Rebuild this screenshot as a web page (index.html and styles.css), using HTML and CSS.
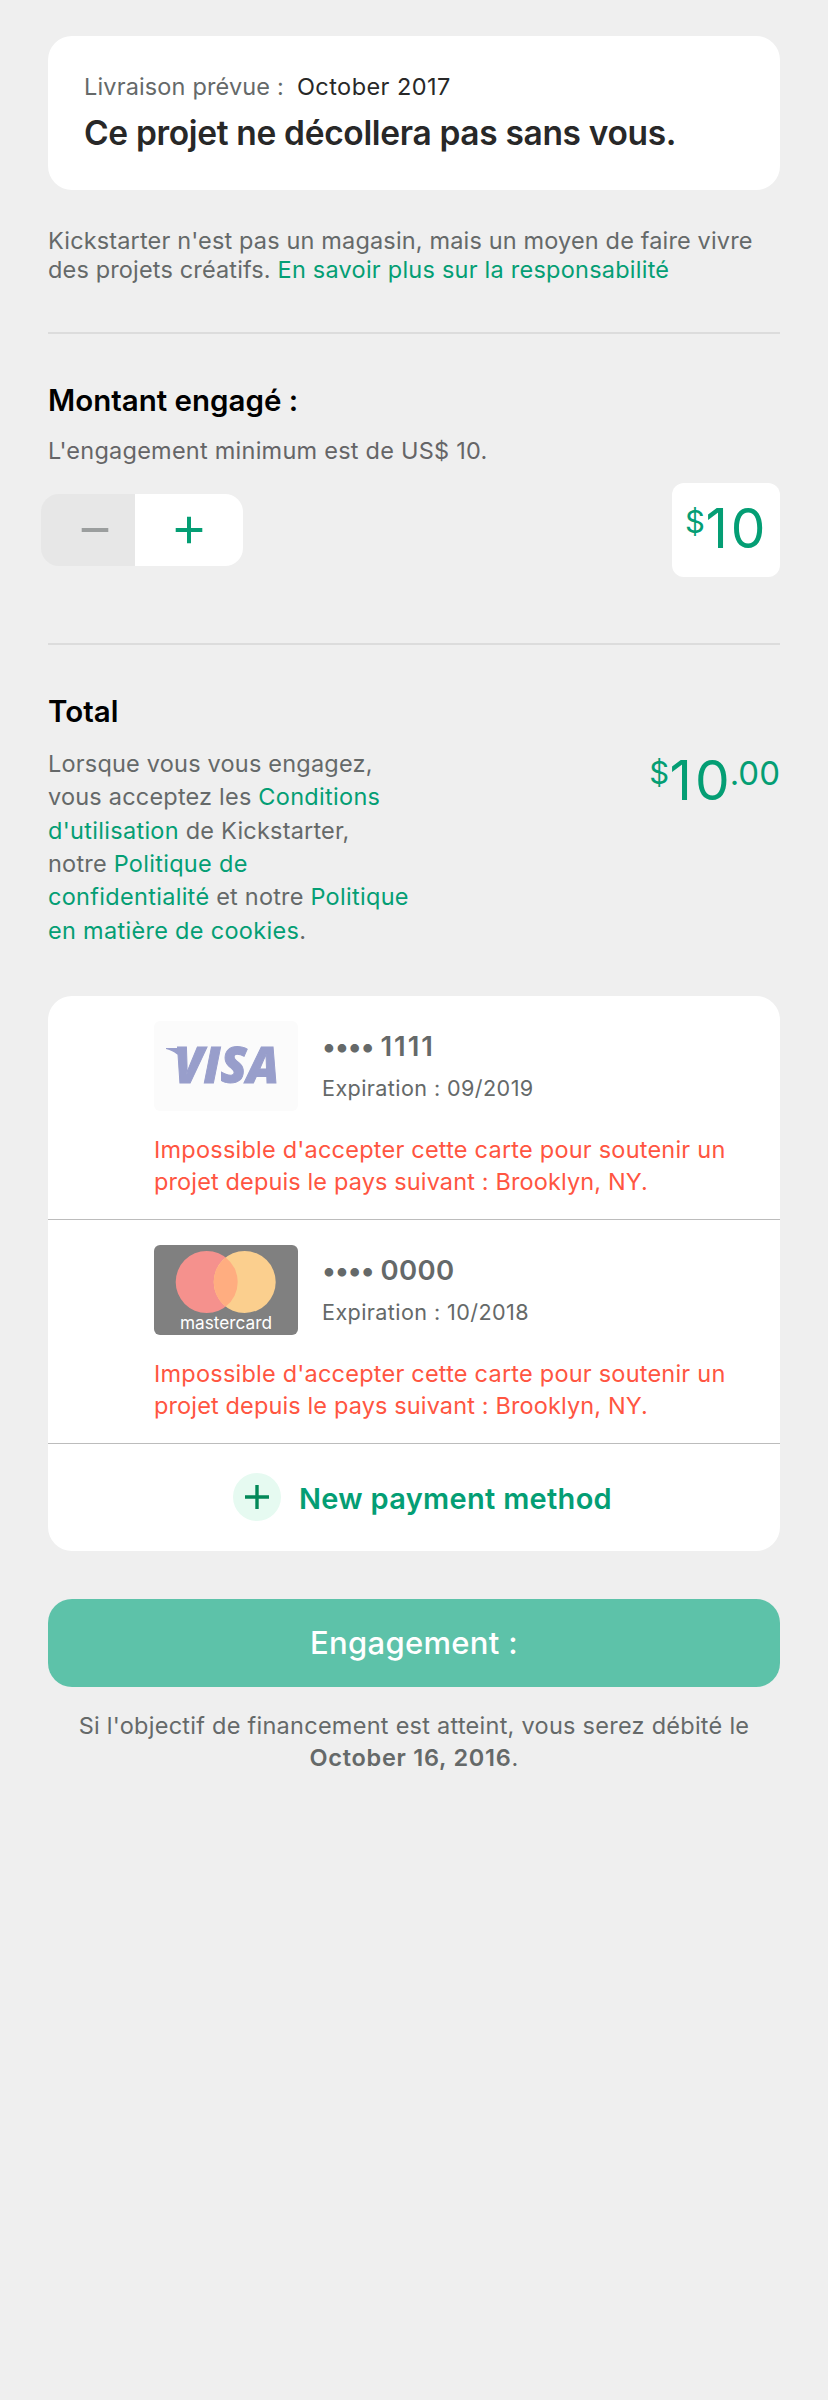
FILE: index.html
```html
<!DOCTYPE html>
<html lang="fr">
<head>
<meta charset="utf-8">
<title>Engagement</title>
<link rel="stylesheet" href="styles.css">
</head>
<body>
<main class="page">
  <section class="summary">
    <p class="delivery"><span class="delivery-label">Livraison prévue :</span><span class="delivery-date">October 2017</span></p>
    <h1 class="summary-title">Ce projet ne décollera pas sans vous.</h1>
  </section>

  <p class="notice">Kickstarter n'est pas un magasin, mais un moyen de faire vivre<br>des projets créatifs. <a class="link">En savoir plus sur la responsabilité</a></p>

  <section class="pledge">
    <h2 class="heading">Montant engagé :</h2>
    <p class="minimum">L'engagement minimum est de US$ 10.</p>
    <div class="pledge-row">
      <div class="stepper">
        <button class="step step-minus" aria-label="Moins"><svg width="28" height="28" viewBox="0 0 28 28"><path d="M.7 14h26.6" stroke="#9b9e9e" stroke-width="4"/></svg></button>
        <button class="step step-plus" aria-label="Plus"><svg width="28" height="28" viewBox="0 0 28 28"><path d="M.7 14h26.6M14 .7v26.6" stroke="#049e74" stroke-width="4"/></svg></button>
      </div>
      <div class="amount amount-box"><span class="small">$</span><span class="big">10</span></div>
    </div>
  </section>

  <section class="total">
    <h2 class="heading">Total</h2>
    <div class="total-row">
      <p class="terms">Lorsque vous vous engagez,<br>vous acceptez les <a class="link">Conditions</a><br><a class="link">d'utilisation</a> de Kickstarter,<br>notre <a class="link">Politique de</a><br><a class="link">confidentialité</a> et notre <a class="link">Politique</a><br><a class="link">en matière de cookies</a>.</p>
      <div class="amount amount-total"><span class="small">$</span><span class="big">10</span><span class="cents">.00</span></div>
    </div>
  </section>

  <section class="methods">
    <article class="method">
      <div class="method-top">
        <svg class="brand" width="144" height="90" viewBox="0 0 144 90">
          <rect width="144" height="90" rx="6" fill="#fbfbfb"/>
          <path d="M12 27h14.500l2 9-6-3Q19 30 12 28z" fill="#989ecb"/>
          <text class="visa" x="20" y="62.3" textLength="105" lengthAdjust="spacingAndGlyphs">VISA</text>
        </svg>
        <div class="card-info">
          <p class="number"><span class="dots">••••</span><span class="ones">1111</span></p>
          <p class="expiry">Expiration : 09/2019</p>
        </div>
      </div>
      <p class="error">Impossible d'accepter cette carte pour soutenir un<br><span class="error-place">projet depuis le pays suivant : Brooklyn, NY.</span></p>
    </article>
    <article class="method">
      <div class="method-top">
        <svg class="brand" width="144" height="90" viewBox="0 0 144 90">
          <rect width="144" height="90" rx="6" fill="#808080"/>
          <circle cx="52.7" cy="37" r="31" fill="#f5918d"/>
          <circle cx="90.7" cy="37" r="31" fill="#fbcf8e"/>
          <path d="M71.7 12.5a31 31 0 0 1 0 49 31 31 0 0 1 0-49z" fill="#ffad80"/>
          <text class="mastercard" x="26" y="83.500" textLength="92" lengthAdjust="spacingAndGlyphs">mastercard</text>
        </svg>
        <div class="card-info">
          <p class="number"><span class="dots">••••</span><span>0000</span></p>
          <p class="expiry">Expiration : 10/2018</p>
        </div>
      </div>
      <p class="error">Impossible d'accepter cette carte pour soutenir un<br><span class="error-place">projet depuis le pays suivant : Brooklyn, NY.</span></p>
    </article>
    <div class="new-method">
      <svg width="48" height="48" viewBox="0 0 48 48"><circle cx="24" cy="24" r="24" fill="#e6faf1"/><path d="M12 24h24M24 12v24" stroke="#028858" stroke-width="3.4"/></svg>
      <span class="new-label">New payment method</span>
    </div>
  </section>

  <button class="submit">Engagement :</button>
  <p class="footnote">Si l'objectif de financement est atteint, vous serez débité le<br><b>October 16, 2016</b>.</p>
</main>
</body>
</html>
```

FILE: styles.css
```css
* { box-sizing: border-box; margin: 0; padding: 0; }
body { background: #efefef; color: #656969; font-family: Inter, "Liberation Sans", sans-serif; font-size: 23.5px; }
.page { padding: 36px 48px 0; min-height: 2400px; }
button { border: 0; font: inherit; }
svg { display: block; }
.link { color: #049e74; }

.summary { height: 154px; padding: 35px 36px 0; border-radius: 24px; background: #fff; color: #282828; }
.delivery { display: flex; gap: 13px; line-height: 31px; letter-spacing: .15px; }
.delivery-label { color: #656969; }
.delivery-date { letter-spacing: .45px; }
.summary-title { margin-top: 11px; font-size: 33.5px; font-weight: 600; line-height: 40px; letter-spacing: -.33px; white-space: nowrap; }
.notice { margin-top: 36px; line-height: 29px; letter-spacing: .15px; white-space: nowrap; }
.notice .link { letter-spacing: .235px; }

.heading { color: #000; font-size: 29.5px; font-weight: 600; line-height: 36px; letter-spacing: 0; }
.pledge { margin-top: 48px; padding-top: 48px; border-top: 2px solid #dcdcdc; }
.minimum { margin-top: 17px; color: #656567; line-height: 31px; letter-spacing: .24px; }
.pledge-row { display: flex; justify-content: space-between; align-items: center; margin-top: 17px; }
.stepper { display: flex; width: 202px; height: 72px; margin-left: -7px; border-radius: 18px; overflow: hidden; }
.step { display: flex; align-items: center; }
.step-minus { width: 94px; padding-left: 40px; background: #e7e7e7; }
.step-plus { width: 108px; padding-left: 40px; background: #fff; }

.amount { display: flex; align-items: flex-start; color: #049e74; white-space: nowrap; }
.amount-box { width: 108px; height: 94px; padding: 15px 0 0 13px; border-radius: 12px; background: #fff; }
.big { margin-left: .5px; font-size: 55px; line-height: 60px; letter-spacing: 3px; }
.small { margin-top: 4px; font-size: 31px; line-height: 40px; }
.cents { margin: 3px 0 0 -3px; font-size: 33px; line-height: 40px; }
.amount-total { padding-top: 3px; }
.amount-total .small { margin-top: 3px; }

.total { margin-top: 66px; padding-top: 48px; border-top: 2px solid #dcdcdc; }
.total-row { display: flex; justify-content: space-between; margin-top: 18px; }
.terms { line-height: 33.33px; letter-spacing: .2px; white-space: nowrap; }
.terms .link { letter-spacing: .3px; }

.methods { margin-top: 49px; border-radius: 24px; background: #fff; overflow: hidden; }
.method { height: 224px; padding: 25px 0 0 106px; border-bottom: 1px solid #bcbcbc; }
.method-top { display: flex; gap: 24px; }
.card-info { padding-top: 8px; }
.number { display: flex; gap: 7px; font-size: 27.5px; font-weight: 600; line-height: 34px; letter-spacing: .3px; }
.dots { letter-spacing: -.95px; }
.ones { letter-spacing: 1.9px; }
.expiry { margin-top: 12px; font-size: 21.6px; line-height: 26px; letter-spacing: .4px; }
.error { margin-top: 23px; color: #ff5541; line-height: 32px; letter-spacing: .22px; white-space: nowrap; }
.error-place { letter-spacing: .13px; }
.visa { fill: #989ecb; stroke: #989ecb; stroke-width: 1; font: italic 800 49px "Open Sans", sans-serif; }
.mastercard { fill: #fff; font: 400 17.5px Inter, sans-serif; }

.new-method { display: flex; align-items: center; gap: 18px; height: 107px; padding: 0 0 0 185px; color: #049e74; font-size: 29px; font-weight: 600; letter-spacing: .3px; }
.new-label { padding-top: 2px; }
.submit { display: block; width: 100%; height: 88px; margin-top: 48px; border-radius: 24px; background: #5dc2a9; color: #fff; font-size: 31px; font-weight: 500; letter-spacing: .3px; }
.footnote { margin-top: 23px; line-height: 32px; letter-spacing: .26px; text-align: center; white-space: nowrap; }
.footnote b { font-weight: 600; letter-spacing: .75px; }
```
